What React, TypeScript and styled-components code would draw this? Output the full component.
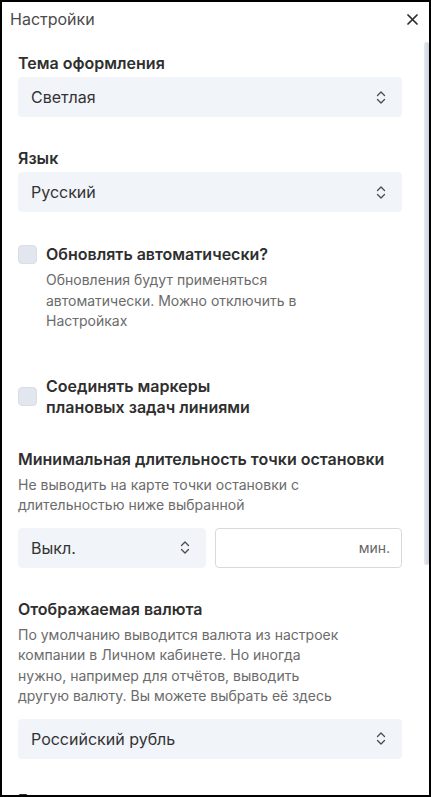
import React, { useState } from 'react';
import styled, { createGlobalStyle } from 'styled-components';

const GlobalStyle = createGlobalStyle`
  html, body {
    margin: 0;
    padding: 0;
    background: #ffffff;
  }
  * {
    box-sizing: border-box;
  }
  body {
    font-family: Inter, "Noto Sans", "Liberation Sans", sans-serif;
  }
`;

const Panel = styled.div`
  width: 431px;
  height: 797px;
  border: 2px solid #000;
  background: #fff;
  display: flex;
  flex-direction: column;
  overflow: hidden;
`;

const Header = styled.header`
  height: 38px;
  flex-shrink: 0;
  display: flex;
  align-items: center;
  justify-content: space-between;
  padding: 0 11px 4px 8px;
`;

const Title = styled.h1`
  margin: 0;
  font-size: 16px;
  font-weight: 400;
  color: #4b4b4b;
  line-height: 22px;
`;

const CloseButton = styled.button`
  background: none;
  border: none;
  padding: 0;
  width: 11px;
  height: 11px;
  display: flex;
  align-items: center;
  justify-content: center;
  cursor: pointer;
`;

const Main = styled.div`
  flex: 1;
  min-height: 0;
  display: flex;
`;

const Body = styled.div`
  flex: 1;
  overflow: hidden;
  padding: 13px 21px 90px 16px;
`;

// custom scroll rail (thumb at top, content is scrolled to the start)
const Rail = styled.div`
  width: 6px;
  flex-shrink: 0;
  padding: 2px 0 0 1px;
`;

const Thumb = styled.div`
  height: 523px;
  border-radius: 3px;
  background: linear-gradient(to right, #e6eaf0, #c9d2de);
`;

const Section = styled.section<{ $gap?: number }>`
  display: flex;
  flex-direction: column;
  margin-bottom: ${p => p.$gap ?? 31}px;
`;

const Label = styled.div`
  font-size: 16px;
  font-weight: 600;
  line-height: 20px;
  color: #2f2f2f;
  margin-bottom: 4px;
`;

const Hint = styled.p<{ $width?: number; $top?: number }>`
  margin: ${p => p.$top ?? 2}px 0 0;
  font-size: 14px;
  line-height: 20.5px;
  color: #6b6b6b;
  max-width: ${p => p.$width ?? 325}px;
`;

const SelectBox = styled.div`
  height: 40px;
  border-radius: 4px;
  background: #f1f4f9;
  display: flex;
  align-items: center;
  justify-content: space-between;
  padding: 0 16px 0 13px;
  font-size: 16px;
  color: #333;
  cursor: pointer;
`;

const FieldRow = styled.div<{ $cols?: number }>`
  display: grid;
  grid-template-columns: repeat(${p => p.$cols ?? 2}, 1fr);
  gap: 9px;
  margin-top: 12px;
`;

const UnitInput = styled.div`
  height: 40px;
  border: 1px solid #d6d9de;
  border-radius: 4px;
  display: flex;
  align-items: center;
  justify-content: flex-end;
  padding: 0 11px;
  font-size: 14px;
  color: #666;
`;

const CheckRow = styled.label<{ $align?: string }>`
  display: flex;
  align-items: ${p => p.$align ?? 'flex-start'};
  gap: 9px;
  cursor: pointer;
`;

const Box = styled.span<{ $top?: number }>`
  width: 19px;
  height: 19px;
  flex-shrink: 0;
  border-radius: 4px;
  background: #e2e7ef;
  border: 1px solid #d9dfe8;
  margin-top: ${p => p.$top ?? 0}px;
`;

const CheckText = styled.div`
  display: flex;
  flex-direction: column;
`;

const CheckTitle = styled.div<{ $width?: number }>`
  font-size: 16px;
  font-weight: 600;
  line-height: 21px;
  color: #2f2f2f;
  max-width: ${p => (p.$width ? `${p.$width}px` : 'none')};
`;

const Chevrons = () => (
  <svg width="10" height="15" viewBox="0 0 10 15" fill="none">
    <path d="M1.5 5.5 L5 2 L8.5 5.5" stroke="#4a4a4a" strokeWidth="1.3" strokeLinecap="round" strokeLinejoin="round" />
    <path d="M1.5 9.5 L5 13 L8.5 9.5" stroke="#4a4a4a" strokeWidth="1.3" strokeLinecap="round" strokeLinejoin="round" />
  </svg>
);

const Select = ({ value }: { value: string }) => (
  <SelectBox>
    <span>{value}</span>
    <Chevrons />
  </SelectBox>
);

export default function App() {
  const [autoUpdate] = useState(false);

  return (
    <>
      <GlobalStyle />
      <Panel>
        <Header>
          <Title>Настройки</Title>
          <CloseButton aria-label="Закрыть">
            <svg width="11" height="11" viewBox="0 0 11 11">
              <path d="M1 1 L10 10 M10 1 L1 10" stroke="#2b2b2b" strokeWidth="1.7" strokeLinecap="round" />
            </svg>
          </CloseButton>
        </Header>

        <Main>
          <Body>
            <Section>
              <Label>Тема оформления</Label>
              <Select value="Светлая" />
            </Section>

            <Section $gap={32}>
              <Label>Язык</Label>
              <Select value="Русский" />
            </Section>

            <Section $gap={44}>
              <CheckRow>
                <Box $top={1} data-checked={autoUpdate} />
                <CheckText>
                  <CheckTitle>Обновлять автоматически?</CheckTitle>
                  <Hint $width={280} $top={5}>
                    Обновления будут применяться автоматически. Можно отключить в Настройках
                  </Hint>
                </CheckText>
              </CheckRow>
            </Section>

            <Section>
              <CheckRow $align="center">
                <Box />
                <CheckText>
                  <CheckTitle $width={220}>Соединять маркеры плановых задач линиями</CheckTitle>
                </CheckText>
              </CheckRow>
            </Section>

            <Section>
              <Label>Минимальная длительность точки остановки</Label>
              <Hint>Не выводить на карте точки остановки с длительностью ниже выбранной</Hint>
              <FieldRow>
                <Select value="Выкл." />
                <UnitInput>мин.</UnitInput>
              </FieldRow>
            </Section>

            <Section>
              <Label>Отображаемая валюта</Label>
              <Hint>
                По умолчанию выводится валюта из настроек компании в Личном кабинете. Но иногда
                нужно, например для отчётов, выводить другую валюту. Вы можете выбрать её здесь
              </Hint>
              <FieldRow $cols={1}>
                <Select value="Российский рубль" />
              </FieldRow>
            </Section>

            <Section>
              <Label>Единицы измерения</Label>
              <Select value="Километры" />
            </Section>
          </Body>
          <Rail>
            <Thumb />
          </Rail>
        </Main>
      </Panel>
    </>
  );
}
